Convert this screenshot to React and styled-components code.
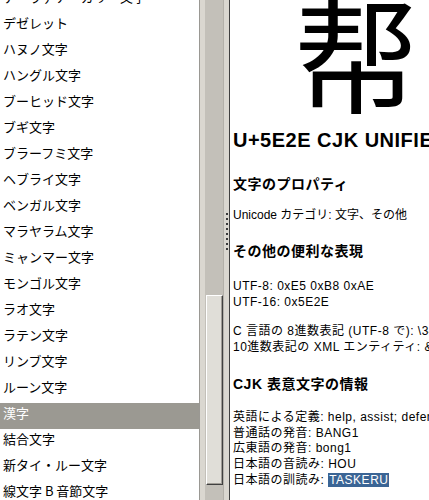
import React from 'react';
import styled, { createGlobalStyle } from 'styled-components';

const Global = createGlobalStyle`
  html, body { margin: 0; padding: 0; background: #fff; }
  body { width: 429px; height: 500px; overflow: hidden; }
`;

const Window = styled.div`
  display: flex;
  width: 429px;
  height: 500px;
  overflow: hidden;
  background: #d8d5ce;
`;

const ListFrame = styled.div`
  width: 199px;
  flex: none;
  border-right: 1px solid #9a9893;
  background: #fff;
  overflow: hidden;
`;

const ListInner = styled.ul`
  margin: -13px 0 0;
  padding: 0;
  list-style: none;
`;

const Row = styled.li`
  height: 26px;
  line-height: 26px;
  padding-left: 3px;
  font: 13px "Noto Sans CJK JP", sans-serif;
  white-space: nowrap;
  color: ${(p) => (p.$selected ? '#fff' : '#000')};
  background: ${(p) => (p.$selected ? '#9b9992' : 'transparent')};
`;

const Spacer = styled.div`
  width: 5px;
  flex: none;
  background: #dad7d0;
`;

const Scrollbar = styled.div`
  width: 18px;
  flex: none;
  box-sizing: border-box;
  background: #c3c0b9;
  display: flex;
  flex-direction: column;
  padding-top: 295px;
`;

const Thumb = styled.div`
  height: 190px;
  margin-left: 1px;
  width: 17px;
  box-sizing: border-box;
  background: #e0ded8;
  border-top: 1px solid #fff;
  border-left: 1px solid #fff;
  border-right: 1px solid #404040;
  border-bottom: 1px solid #404040;
  box-shadow: inset -1px -1px 0 #a09d96;
`;

const Handle = styled.div`
  width: 6px;
  flex: none;
  box-sizing: border-box;
  border-left: 1px solid #b3b0a9;
  background: #dad7d0;
  display: flex;
  justify-content: center;
  padding-top: 213px;
`;

const Grip = styled.div`
  width: 2px;
  height: 38px;
  background: repeating-linear-gradient(to bottom, #3a3a3a 0 2px, transparent 2px 5px);
`;

const Detail = styled.div`
  flex: 1;
  min-width: 0;
  background: #fff;
  border-left: 1px solid #404040;
  padding-left: 3px;
  overflow: hidden;
  font: 12px "Liberation Sans", "Noto Sans CJK JP", sans-serif;
  line-height: 15.75px;
  letter-spacing: 0.5px;
  color: #000;
  white-space: nowrap;
`;

const GlyphBox = styled.div`
  height: 120px;
  padding-left: 61px;
  font: 125px/100px "Noto Sans CJK SC", sans-serif;
  letter-spacing: 0;
  overflow: hidden;
`;

const Title = styled.div`
  margin-top: 8px;
  font: bold 20px/24px "Liberation Sans", sans-serif;
  letter-spacing: 0.5px;
`;

const Heading = styled.div`
  margin-top: ${(p) => p.$mt}px;
  font: bold 14px/18px "Liberation Sans", "Noto Sans CJK JP", sans-serif;
  letter-spacing: 0.5px;
`;

const Para = styled.div`
  margin-top: ${(p) => p.$mt}px;
  letter-spacing: ${(p) => (p.$tight ? '0' : '0.5px')};
`;

const Selection = styled.span`
  background: #3b6595;
  color: #fff;
  padding: 0 1px;
`;

const scripts = [
  'デーヴァナーガリー文字',
  'デゼレット',
  'ハヌノ文字',
  'ハングル文字',
  'ブーヒッド文字',
  'ブギ文字',
  'ブラーフミ文字',
  'ヘブライ文字',
  'ベンガル文字',
  'マラヤラム文字',
  'ミャンマー文字',
  'モンゴル文字',
  'ラオ文字',
  'ラテン文字',
  'リンブ文字',
  'ルーン文字',
  '漢字',
  '結合文字',
  '新タイ・ルー文字',
  '線文字 B 音節文字',
];

export default function App() {
  return (
    <>
      <Global />
      <Window>
        <ListFrame>
          <ListInner>
            {scripts.map((s) => (
              <Row key={s} $selected={s === '漢字'}>{s}</Row>
            ))}
          </ListInner>
        </ListFrame>
        <Spacer />
        <Scrollbar>
          <Thumb />
        </Scrollbar>
        <Handle>
          <Grip />
        </Handle>
        <Detail>
          <GlyphBox>帮</GlyphBox>
          <Title>U+5E2E CJK UNIFIED IDEOGRAPH-5E2E</Title>
          <Heading $mt={23}>文字のプロパティ</Heading>
          <Para $mt={15} $tight>Unicode カテゴリ: 文字、その他</Para>
          <Heading $mt={18}>その他の便利な表現</Heading>
          <Para $mt={19}>
            UTF-8: 0xE5 0xB8 0xAE
            <br />
            UTF-16: 0x5E2E
          </Para>
          <Para $mt={14}>
            C 言語の 8進数表記 (UTF-8 で): \345\270\256
            <br />
            10進数表記の XML エンティティ: &amp;#24110;
          </Para>
          <Heading $mt={19}>CJK 表意文字の情報</Heading>
          <Para $mt={17}>
            英語による定義: help, assist; defend; shoe upper; gang
            <br />
            普通話の発音: BANG1
            <br />
            広東語の発音: bong1
            <br />
            日本語の音読み: HOU
            <br />
            日本語の訓読み: <Selection>TASKERU</Selection>
          </Para>
        </Detail>
      </Window>
    </>
  );
}
